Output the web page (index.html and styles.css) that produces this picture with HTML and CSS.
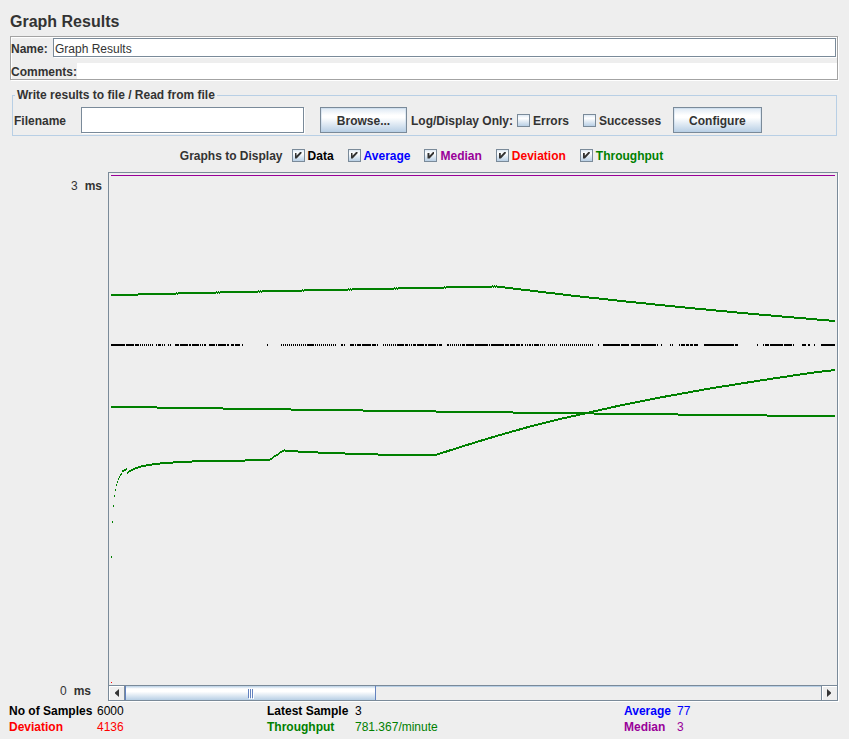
FILE: index.html
```html
<!DOCTYPE html>
<html lang="en">
<head>
<meta charset="utf-8">
<title>Graph Results</title>
<link rel="stylesheet" href="styles.css">
</head>
<body>
<h1 class="title">Graph Results</h1>

<div class="identity">
  <div class="name-row">
    <label class="text" for="name">Name:</label>
    <input class="field" id="name" type="text" value="Graph Results">
  </div>
  <div class="comment-row">
    <label class="text" for="comments">Comments:</label>
    <input class="plain-field" id="comments" type="text">
  </div>
</div>

<fieldset class="file-panel">
  <legend>Write results to file / Read from file</legend>
  <div class="file-row">
    <label class="file-label text" for="filename">Filename</label>
    <input class="field file-field" id="filename" type="text">
    <button class="button" type="button">Browse...</button>
    <span class="log-label text">Log/Display Only:</span>
    <label class="check errors"><input type="checkbox"><span class="text">Errors</span></label>
    <label class="check successes"><input type="checkbox"><span class="text">Successes</span></label>
    <button class="button" type="button">Configure</button>
  </div>
</fieldset>

<div class="series">
  <span class="series-label text">Graphs to Display</span>
  <label class="check black"><input type="checkbox" checked><span class="text">Data</span></label>
  <label class="check blue"><input type="checkbox" checked><span class="text">Average</span></label>
  <label class="check purple"><input type="checkbox" checked><span class="text">Median</span></label>
  <label class="check red"><input type="checkbox" checked><span class="text">Deviation</span></label>
  <label class="check green"><input type="checkbox" checked><span class="text">Throughput</span></label>
</div>

<main class="graph">
  <div class="axis">
    <div class="tick tick-top"><span>3</span><b>ms</b></div>
    <div class="tick tick-bottom"><span>0</span><b>ms</b></div>
  </div>
  <div class="viewport">
    <div class="plot">
      <svg viewBox="109 173 728 512" preserveAspectRatio="none" shape-rendering="crispEdges" fill="none" aria-label="Sample graph">
        <path stroke="#990099" d="M111 175.500H835"/>
        <path stroke="#ff0000" d="M111 682.500h1"/>
        <path stroke="#000" stroke-width="2" d="M111 345H125M126 345H134M135 345H139M158 345H161M175 345H179M180 345H188M189 345H191M192 345H199M204 345H206M209 345H215M218 345H226M227 345H229M231 345H234M235 345H240M307 345H314M341 345H343M350 345H354M357 345H361M362 345H371M372 345H376M397 345H404M405 345H408M413 345H416M417 345H424M425 345H427M428 345H436M439 345H442M447 345H449M462 345H465M466 345H474M475 345H488M491 345H504M505 345H509M510 345H515M516 345H520M521 345H523M529 345H531M534 345H539M603 345H620M621 345H629M631 345H640M641 345H656M681 345H685M686 345H689M690 345H693M694 345H698M704 345H734M735 345H738M765 345H769M770 345H783M784 345H792M802 345H806M808 345H810M821 345H835"/>
        <path stroke="#000" stroke-width="2" d="M156 345h1M162 345h1M164 345h1M168 345h1M170 345h1M200 345h1M202 345h1M216 345h1M242 345h1M267 345h1M344 345h1M355 345h1M377 345h1M409 345h1M411 345h1M437 345h1M489 345h1M525 345h1M527 345h1M532 345h1M540 345h1M542 345h1M544 345h1M598 345h1M657 345h1M661 345h1M670 345h1M672 345h1M679 345h1M757 345h1M763 345h1M793 345h1M814 345h1"/>
        <path stroke="#000" stroke-width="2" stroke-dasharray="1 1" d="M140 345H153M281 345H306M315 345H336M383 345H396M450 345H461M548 345H557M560 345H593"/>
        <path stroke="#008000" stroke-width="2" d="M111 295H138m0-1H176m0-1h1m0 1h1m0-1H216m0-1h1m0 1h1m0-1h1m0 1h1m0-1H258m0-1h1m0 1h1m0-1h1m0 1h1m0-1H302m0-1h1m0 1h1m0-1H348m0-1h1m0 1h1m0-1h1m0 1h1m0-1H394m0-1h1m0 1h1m0-1h1m0 1h1m0-1H444m0-1h1m0 1h1m0-1H492m0-1h1m0 1h1m0-1h1m0 1h1m0-1h1m0 1H505m0 1H513m0 1H521m0 1H530m0 1H538m0 1H546m0 1H555m0 1H563m0 1H571m0 1H580m0 1H589m0 1H599m0 1H608m0 1H617m0 1H626m0 1H636m0 1H646m0 1H655m0 1H665m0 1H675m0 1H685m0 1H695m0 1H706m0 1H716m0 1H727m0 1H737m0 1H748m0 1H759m0 1H771m0 1H782m0 1H794m0 1H806m0 1H817m0 1H829m0 1H835"/>
        <path stroke="#008000" stroke-width="2" d="M111 407H157m0 1H223m0 1H291m0 1H363m0 1H436m0 1H513m0 1H594m0 1H678m0 1H767m0 1H835"/>
        <path stroke="#008000" stroke-width="2" d="M111 557h1m0-35h1m0-16h1m0-10h1m0-6h1m0-5h1m0-3h1m0-3h1m0-2h1m0-2h1m0-1h1m0-3h2m0-1h2m0-1h1m0 4h1m0-1h1m0-1H131m0-1H133m0-1H135m0-1H138m0-1H141m0-1H146m0-1H152m0-1H160m0-1H173m0-1H192m0-1H245m0-1H270m0-1H272m0-1h1m0-1h1m0-1h2m0-1h2m0-1h1m0-1h1m0-1h2m0-1h2m0-1h1m0 1H298m0 1H318m0 1H345m0 1H378m0 1H437"/>
        <polyline stroke="#008000" stroke-width="2" points="437,454.500 470,444 500,435 530,426.500 560,419 587,413 620,405.500 660,397.500 710,388.500 760,380.500 810,373 835,370"/>
      </svg>
    </div>
    <div class="scrollbar">
      <button class="arrow" type="button" aria-label="Scroll left"><svg viewBox="0 0 5 8"><path d="M5 0v8L1 4.500v-1z"/></svg></button>
      <div class="track"><div class="thumb"><i></i><i></i><i></i></div></div>
      <button class="arrow arrow-right" type="button" aria-label="Scroll right"><svg viewBox="0 0 5 8"><path d="M0 0v8l4-3.500v-1z"/></svg></button>
    </div>
  </div>
</main>

<footer class="stats">
  <dl>
    <dt>No of Samples</dt><dd>6000</dd>
    <dt class="red">Deviation</dt><dd class="red">4136</dd>
  </dl>
  <dl>
    <dt>Latest Sample</dt><dd>3</dd>
    <dt class="green">Throughput</dt><dd class="green">781.367/minute</dd>
  </dl>
  <dl class="narrow">
    <dt class="blue">Average</dt><dd class="blue">77</dd>
    <dt class="purple">Median</dt><dd class="purple">3</dd>
  </dl>
</footer>
</body>
</html>
```
FILE: styles.css
```css
* { box-sizing: border-box; }

body {
  margin: 0;
  padding: 13px 11px 4px 10px;
  min-height: 100vh;
  display: flex;
  flex-direction: column;
  background: #eeeeee;
  color: #333333;
  font: bold 12px/16px "Liberation Sans", Arial, sans-serif;
}

input, button { font: inherit; color: inherit; }

.title { margin: 0 0 5px; font-size: 16px; line-height: 18px; }
.text { line-height: 14px; padding-top: 2px; }

.black { color: #000000; }
.blue { color: #0000ff; }
.purple { color: #990099; }
.red { color: #ff0000; }
.green { color: #008000; }

.identity {
  border: 1px solid #a3a3a3;
  box-shadow: 1px 1px 0 #ffffff, inset 1px 1px 0 #ffffff;
  padding-top: 1px;
}
.name-row, .comment-row { display: flex; align-items: center; }
.name-row { gap: 5px; padding-right: 1px; margin-bottom: 6px; }
.name-row label { width: 37px; }
.comment-row label { width: 66px; white-space: nowrap; }

.field {
  flex: 1;
  min-width: 0;
  height: 19px;
  padding: 2px 1px 0;
  border: 1px solid #7a8a99;
  border-radius: 0;
  box-shadow: 1px 1px 0 #ffffff;
  background: #ffffff;
  font-weight: normal;
}
.plain-field {
  flex: 1;
  min-width: 0;
  height: 16px;
  padding: 0;
  border: 0;
  background: #ffffff;
  font-weight: normal;
}

.file-panel {
  margin: 7px 1px 0 2px;
  padding: 4px 0 2px 1px;
  border: 1px solid #b8cfe5;
}
.file-panel legend { margin-left: 1px; padding: 0 2px; }
.file-row { display: flex; align-items: center; }
.file-label { width: 67px; }
.file-field { flex: 0 0 223px; height: 26px; margin-right: 16px; }
.log-label { flex: 0 0 106px; margin-left: 4px; white-space: nowrap; }
.successes { margin: 0 12px 0 14px; }

.button {
  height: 26px;
  min-width: 87px;
  padding: 2px 15px 0;
  border: 1px solid #7a8a99;
  box-shadow: inset 0 0 0 1px rgba(184, 207, 229, 0.4);
  background: linear-gradient(#dde8f3, #ffffff 30%, #ffffff 40%, #b8cfe5);
}

.check { display: flex; align-items: center; gap: 3px; white-space: nowrap; }
.check input {
  appearance: none;
  display: grid;
  place-items: center;
  width: 13px;
  height: 13px;
  margin: 0;
  border: 1px solid #7a8a99;
  background: linear-gradient(#dde8f3, #ffffff 30%, #b8cfe5);
}
.check input:checked::before {
  content: "";
  width: 7px;
  height: 7px;
  background: #333333;
  clip-path: polygon(0 20%, 28% 20%, 28% 60%, 85% 0, 100% 0, 100% 25%, 30% 100%, 0 100%);
}

.series {
  display: flex;
  justify-content: center;
  gap: 14px;
  margin: 11px 0 9px;
  padding-right: 5px;
}
.series-label { margin-right: -5px; }

.graph { flex: 1; display: flex; min-height: 300px; }
.axis {
  flex: 0 0 98px;
  display: flex;
  flex-direction: column;
  justify-content: space-between;
  align-items: flex-end;
  padding: 6px 6px 2px 0;
}
.tick { display: flex; gap: 7px; }
.tick span { font-weight: normal; }
.tick-bottom { margin-right: 11px; }

.viewport {
  flex: 1;
  min-width: 0;
  display: flex;
  flex-direction: column;
  border: 1px solid #7a8a99;
  box-shadow: 1px 1px 0 #ffffff;
}
.plot { flex: 1; position: relative; }
.plot svg { position: absolute; inset: 0; width: 100%; height: 100%; }

.scrollbar { display: flex; height: 15px; border-top: 1px solid #7a8a99; }
.arrow {
  width: 16px;
  padding: 0;
  display: grid;
  place-items: center;
  border: 0;
  border-right: 1px solid #7a8a99;
  background: #eeeeee;
  box-shadow: inset 1px 1px 0 #ffffff;
}
.arrow-right { border-right: 0; border-left: 1px solid #7a8a99; }
.arrow svg { width: 5px; height: 8px; fill: #333333; }
.track { flex: 1; box-shadow: inset 0 1px 0 #b8cfe5; }
.thumb {
  width: 36%;
  height: 100%;
  display: flex;
  align-items: center;
  justify-content: center;
  gap: 1px;
  border: 1px solid #6382bf;
  border-width: 0 1px;
  background: linear-gradient(#b8cfe5, #ffffff 20%, #ffffff 40%, #b8cfe5);
}
.thumb i { width: 1px; height: 9px; background: #6382bf; box-shadow: 1px 1px 0 #ffffff; }

.stats {
  display: grid;
  grid-template-columns: 258fr 357fr 214fr;
  margin: 2px 0 0 -1px;
  color: #000000;
}
.stats dl { display: grid; grid-template-columns: 88px 1fr; margin: 0; }
.stats .narrow { grid-template-columns: 53px 1fr; }
.stats dd { margin: 0; font-weight: normal; }
```
